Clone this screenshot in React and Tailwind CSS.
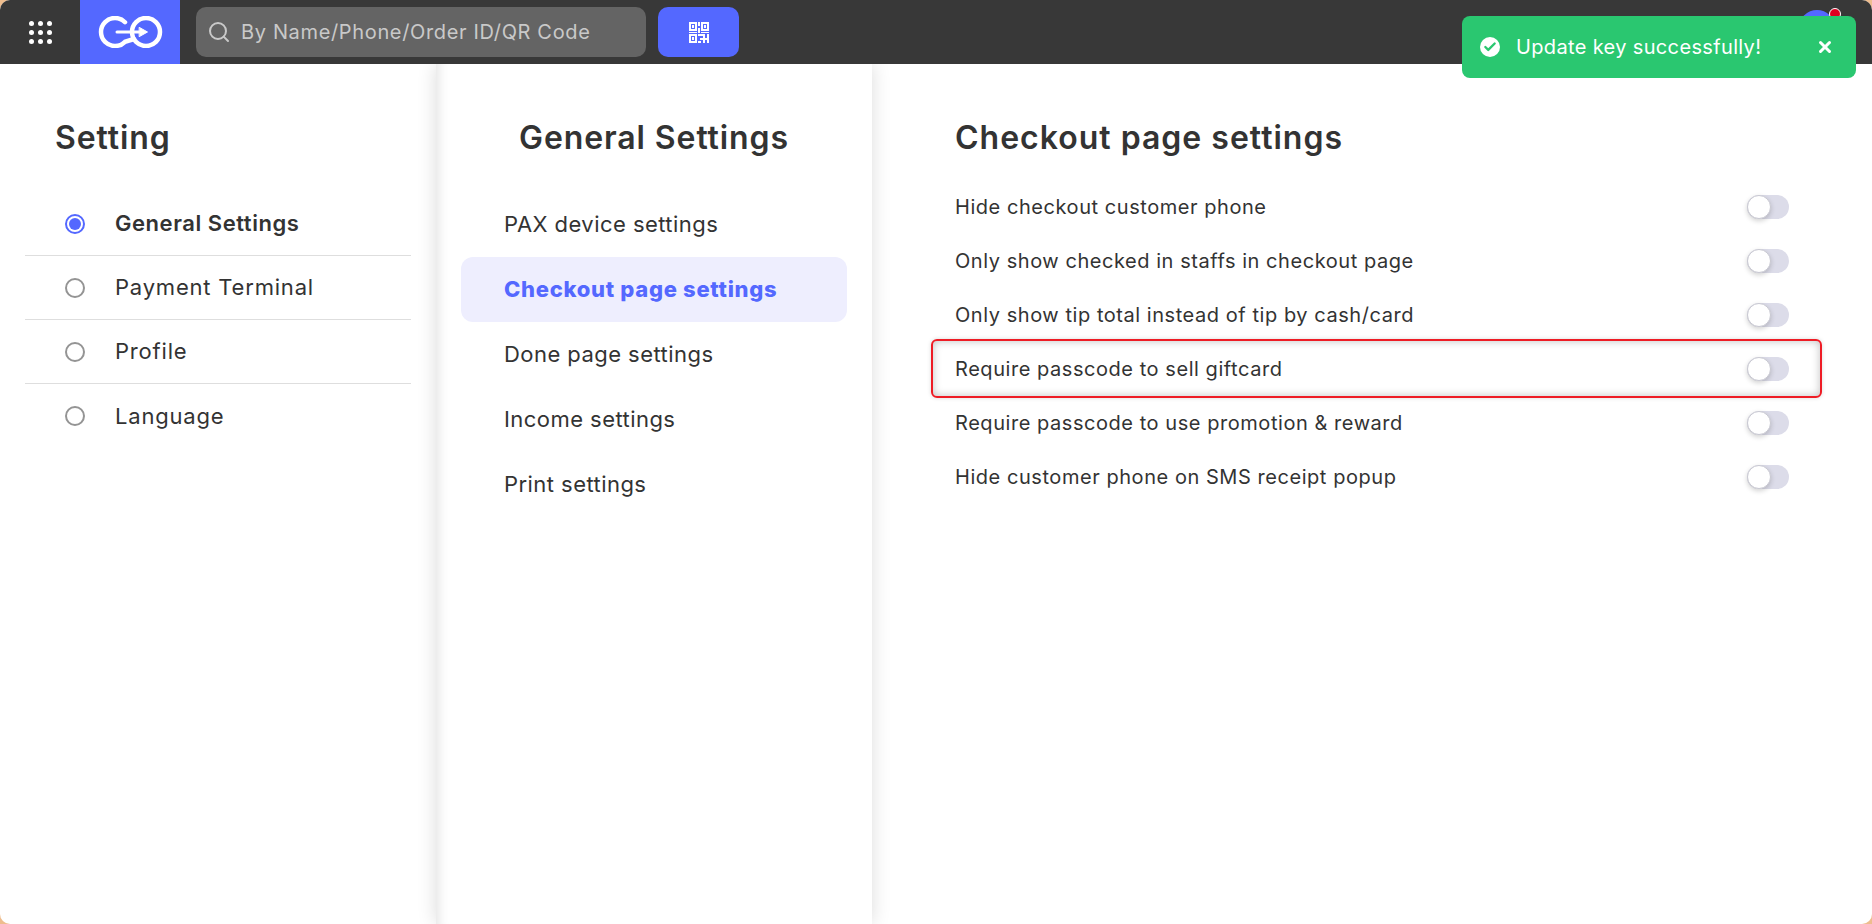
import { Search, X, Check } from "lucide-react"

const mainMenu = ["General Settings", "Payment Terminal", "Profile", "Language"]
const subMenu = ["PAX device settings", "Checkout page settings", "Done page settings", "Income settings", "Print settings"]
const options = [
  "Hide checkout customer phone",
  "Only show checked in staffs in checkout page",
  "Only show tip total instead of tip by cash/card",
  "Require passcode to sell giftcard",
  "Require passcode to use promotion & reward",
  "Hide customer phone on SMS receipt popup",
]

function Logo() {
  return (
    <svg width="68" height="32" viewBox="0 0 68 32" fill="none" stroke="white" strokeWidth="4.5" strokeLinecap="round">
      <path d="M29 6.2A14 14 0 1 0 29 25.8L38 23" />
      <circle cx="50" cy="16" r="14" />
      <path d="M21 16H46" strokeWidth="3" />
      <path d="M43.5 11.5L51.5 16L43.5 20.5Z" fill="white" strokeWidth="1" />
    </svg>
  )
}

function QrIcon() {
  return (
    <svg width="20" height="21" viewBox="0 0 20 21" fill="white">
      <path fillRule="evenodd" d="M0 0H8V9H0ZM2 2V7H6V2Z" />
      <rect x="3" y="3" width="2" height="3" />
      <path fillRule="evenodd" d="M12 0H20V9H12ZM14 2V7H18V2Z" />
      <rect x="15" y="3" width="2" height="3" />
      <rect x="9" y="0" width="2" height="4" />
      <rect x="9" y="6" width="2" height="5" />
      <rect x="0" y="10" width="8" height="1" />
      <rect x="12" y="10" width="8" height="1" />
      <path fillRule="evenodd" d="M0 12H8V21H0ZM2 14V19H6V14Z" />
      <rect x="3" y="15" width="2" height="3" />
      <rect x="9" y="12" width="7" height="2" />
      <rect x="18" y="12" width="2" height="9" />
      <rect x="11" y="16" width="7" height="2" />
      <rect x="14" y="14" width="2" height="7" />
      <rect x="9" y="19" width="3" height="2" />
    </svg>
  )
}

function Toggle() {
  return (
    <div className="w-[42px] h-6 rounded-full bg-[#dcdce9] flex items-center">
      <div className="w-6 h-6 rounded-full bg-white border border-[#c9c9d2] shadow-[0_2px_5px_rgba(0,0,0,0.18)]" />
    </div>
  )
}

function Radio({ active }) {
  if (active) {
    return (
      <div className="w-5 h-5 rounded-full border-2 border-[#5468ff] flex items-center justify-center">
        <div className="w-3 h-3 rounded-full bg-[#5468ff]" />
      </div>
    )
  }
  return <div className="w-5 h-5 rounded-full border-2 border-[#949494]" />
}

export default function App() {
  return (
    <div className="w-[1872px] h-[924px] bg-[#eebd8e] font-['Inter','Liberation_Sans',sans-serif] text-[#333333]">
      <div className="relative w-full h-full rounded-[10px] overflow-hidden bg-white flex flex-col">
        <header className="relative z-20 h-16 shrink-0 bg-[#383838] flex items-center">
          <div className="w-20 h-16 flex items-center justify-center">
            <div className="grid grid-cols-3 gap-x-1 gap-y-1">
              {Array.from({ length: 9 }).map((_, i) => (
                <span key={i} className="w-[5px] h-[5px] rounded-full bg-white" />
              ))}
            </div>
          </div>
          <div className="w-[100px] h-16 bg-[#5468ff] flex items-center justify-center">
            <Logo />
          </div>
          <div className="ml-4 w-[450px] h-[50px] rounded-[10px] bg-[#646464] flex items-center pl-[11px] text-[#c9c9c9]">
            <Search size={24} strokeWidth={2} />
            <span className="ml-[10px] text-[20px] tracking-[0.65px]">By Name/Phone/Order ID/QR Code</span>
          </div>
          <button className="ml-3 w-[81px] h-[50px] rounded-[10px] bg-[#5468ff] flex items-center justify-center">
            <QrIcon />
          </button>
          <div className="ml-auto mr-[37px] -mt-2 relative w-9 h-9 rounded-full bg-[#5468ff]">
            <span className="absolute -top-[2px] -right-[6px] w-3 h-3 rounded-full bg-[#e00020] border border-white" />
          </div>
        </header>

        <div className="flex-1 flex min-h-0">
          <aside className="w-[436px] shrink-0 px-[25px] pt-[52px]">
            <h2 className="h-11 pl-[30px] flex items-center text-[32px] font-semibold tracking-[0.9px]">Setting</h2>
            <ul className="mt-8">
              {mainMenu.map((item, i) => (
                <li key={item} className={`h-16 flex items-center pl-10 gap-[30px] ${i < 3 ? "border-b border-[#dedede]" : ""}`}>
                  <Radio active={i === 0} />
                  <span className={`text-[22px] ${i === 0 ? "font-semibold tracking-[0.55px]" : "tracking-[0.8px]"}`}>{item}</span>
                </li>
              ))}
            </ul>
          </aside>

          <section className="relative z-10 w-[436px] shrink-0 bg-white px-[25px] pt-[52px] shadow-[0_0_18px_rgba(0,0,0,0.14),inset_14px_0_12px_-12px_rgba(0,0,0,0.12)]">
            <h2 className="h-11 flex items-center justify-center text-[32px] font-semibold tracking-[0.9px]">General Settings</h2>
            <ul className="mt-8">
              {subMenu.map((item, i) => (
                <li
                  key={item}
                  className={`h-[65px] flex items-center pl-[43px] text-[22px] rounded-xl ${
                    i === 1 ? "bg-[#eeeefe] text-[#5468ff] font-extrabold tracking-[0.7px]" : "tracking-[0.45px]"
                  }`}
                >
                  {item}
                </li>
              ))}
            </ul>
          </section>

          <main className="flex-1 px-[83px] pt-[52px]">
            <h2 className="h-11 flex items-center text-[32px] font-semibold tracking-[1px]">Checkout page settings</h2>
            <ul className="mt-5">
              {options.map((item, i) => (
                <li key={item} className="relative h-[54px] flex items-center justify-between text-[20px] tracking-[0.55px]">
                  {i === 3 && (
                    <div className="absolute -left-6 -right-[33px] top-[-3px] bottom-[-2px] rounded-md border-2 border-[#ee1c25] shadow-[inset_0_0_8px_rgba(0,0,0,0.25),0_0_4px_rgba(0,0,0,0.15)]" />
                  )}
                  <span className="relative">{item}</span>
                  <Toggle />
                </li>
              ))}
            </ul>
          </main>
        </div>

        <div className="absolute z-30 left-[1462px] top-4 w-[394px] h-[62px] rounded-lg bg-[#2ac770] text-white flex items-center pl-[18px] pr-[22px]">
          <div className="w-5 h-5 rounded-full bg-white flex items-center justify-center">
            <Check size={14} strokeWidth={4} className="text-[#2ac770]" />
          </div>
          <span className="ml-[16px] text-[20px] tracking-[0.35px]">Update key successfully!</span>
          <X size={18} strokeWidth={4} className="ml-auto" />
        </div>
      </div>
    </div>
  )
}
